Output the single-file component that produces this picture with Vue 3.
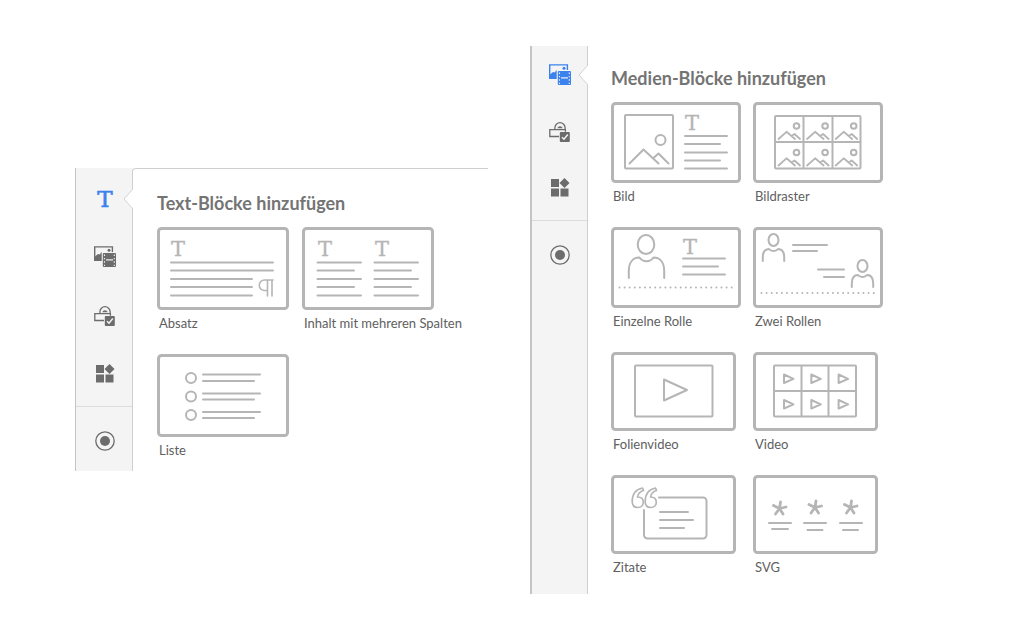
<script setup>
const rail = [
  { id: 'text', label: 'Text' },
  { id: 'media', label: 'Medien' },
  { id: 'interactive', label: 'Interaktiv' },
  { id: 'widgets', label: 'Widgets' },
]

const panels = [
  {
    id: 'text',
    title: 'Text-Blöcke hinzufügen',
    tools: rail,
    cards: [
      { kind: 'absatz', label: 'Absatz', w: 132, h: 83 },
      { kind: 'spalten', label: 'Inhalt mit mehreren Spalten', w: 132, h: 83 },
      { kind: 'liste', label: 'Liste', w: 132, h: 83 },
    ],
  },
  {
    id: 'media',
    title: 'Medien-Blöcke hinzufügen',
    tools: rail.slice(1),
    cards: [
      { kind: 'bild', label: 'Bild', w: 130, h: 81 },
      { kind: 'bildraster', label: 'Bildraster', w: 130, h: 81 },
      { kind: 'rolle', label: 'Einzelne Rolle', w: 130, h: 81 },
      { kind: 'rollen', label: 'Zwei Rollen', w: 130, h: 81 },
      { kind: 'folienvideo', label: 'Folienvideo', w: 125, h: 79 },
      { kind: 'video', label: 'Video', w: 125, h: 79 },
      { kind: 'zitate', label: 'Zitate', w: 125, h: 79 },
      { kind: 'svg', label: 'SVG', w: 125, h: 79 },
    ],
  },
]

const cells = [0, 1].flatMap((row) => [0, 1, 2].map((col) => ({ row, col })))
</script>

<template>
  <main class="page">
    <section v-for="panel in panels" :key="panel.id" class="panel" :class="panel.id">
      <nav class="rail">
        <div class="tools">
          <button
            v-for="tool in panel.tools"
            :key="tool.id"
            type="button"
            class="tool"
            :class="{ active: tool.id === panel.id }"
            :aria-label="tool.label"
          >
            <svg v-if="tool.id === 'text'" width="30" height="34" viewBox="0 0 30 34">
              <text class="rail-letter" x="15" y="25" text-anchor="middle">T</text>
            </svg>
            <svg v-else-if="tool.id === 'media'" width="22" height="22" viewBox="0 0 22 22">
              <path d="M7.5 14.4H.7V.9h17.7v5" fill="none" stroke="currentColor" stroke-width="1.4" />
              <path d="M1 14.5v-4l3-2.6 1.6.6L7.7 6v8.5z" fill="currentColor" />
              <circle cx="15" cy="4.3" r="1.5" fill="currentColor" />
              <rect x="8.8" y="7" width="13.2" height="14" rx="1" fill="currentColor" />
              <path d="M12 13.9h7" class="knock" stroke-width="1.2" />
              <path d="M10.5 8.5v11.5M20.3 8.5v11.5" class="knock" stroke-width="1.1" stroke-dasharray="1.4 2" />
            </svg>
            <svg v-else-if="tool.id === 'interactive'" width="22" height="22" viewBox="0 0 22 22">
              <path d="M10 16.500H.8V9.700H16.400v2" fill="none" stroke="currentColor" stroke-width="1.3" />
              <path d="M5.900 9.500V7.800a5.100 5.100 0 0 1 10.200 0v1.700" fill="none" stroke="currentColor" stroke-width="1.3" />
              <path d="M8.300 8.200a2.800 2.800 0 0 1 5.400 0z" fill="currentColor" />
              <rect x="10.800" y="12" width="10" height="10" rx="1" fill="currentColor" />
              <path d="M13 17.200l2 2 3.800-4.600" class="knock" stroke-width="1.5" />
            </svg>
            <svg v-else width="22" height="22" viewBox="0 0 22 22">
              <path
                d="M2 3h8v8H2zM2 12.500h8v8H2zM11.500 12.500h8v8h-8zM15.500 2l5 5-5 5-5-5z"
                fill="currentColor"
              />
            </svg>
            <svg v-if="tool.id === panel.id" class="notch" width="10" height="22" viewBox="0 0 10 22">
              <path d="M10 1.500L9.500 1.500 1 11l8.500 9.500H10" fill="#fff" stroke="#d2d2d2" />
            </svg>
          </button>
        </div>
        <div class="tools record">
          <button type="button" class="tool" aria-label="Aufzeichnen">
            <svg width="22" height="22" viewBox="0 0 22 22">
              <circle cx="11" cy="11" r="9.200" fill="none" stroke="currentColor" stroke-width="1.3" />
              <circle cx="11" cy="11" r="5" fill="currentColor" />
            </svg>
          </button>
        </div>
      </nav>

      <div class="body">
        <h2>{{ panel.title }}</h2>
        <div class="cards">
          <button v-for="card in panel.cards" :key="card.kind" type="button" class="card">
            <svg class="art" :width="card.w" :height="card.h" :viewBox="`0 0 ${card.w} ${card.h}`" aria-hidden="true">
              <rect x="1.5" y="1.5" :width="card.w - 3" :height="card.h - 3" rx="3" stroke-width="3" />

              <g v-if="card.kind === 'absatz'">
                <text x="21" y="29">T</text>
                <path d="M14 35.500H116M14 43.500H116M14 52H95M14 60H95M14 68.500H95" />
                <path d="M116 53H107.500a5 5 0 0 0 0 10.500H110.500M110.500 53V69M115 53V69" stroke-width="1.6" />
              </g>

              <g v-else-if="card.kind === 'spalten'">
                <text x="23" y="29">T</text>
                <text x="80" y="29">T</text>
                <path d="M15.500 35.500H59M15.500 43.500H52M15.500 52H59M15.500 60H52M15.500 68.500H59" />
                <path d="M72.500 35.500H116M72.500 43.500H109M72.500 52H116M72.500 60H109M72.500 68.500H116" />
              </g>

              <g v-else-if="card.kind === 'liste'">
                <circle v-for="y in [24, 42.5, 61]" :key="y" cx="34" :cy="y" r="5" />
                <path d="M46 20.500H103M46 27H97M46 39.500H103M46 45.500H97M46 58H103M46 64H97" />
              </g>

              <g v-else-if="card.kind === 'bild'">
                <rect x="14" y="13" width="48" height="53.500" rx="1" />
                <circle cx="49.500" cy="38" r="5" />
                <path d="M18.500 61.500L32.500 47.500 47.500 61.500M42.500 56L47.500 51.500 57.500 61.500" />
                <text x="81" y="28">T</text>
                <path d="M74 34H116M74 42H109M74 50.500H116M74 58.500H109M74 66.500H116" />
              </g>

              <g v-else-if="card.kind === 'bildraster'">
                <rect x="22" y="14" width="85.500" height="52.500" rx="1" />
                <path d="M50.500 14V66M79.500 14V66M22 40H107" />
                <g v-for="c in cells" :key="`${c.row}-${c.col}`" :transform="`translate(${c.col * 28.6} ${c.row * 26.5})`">
                  <circle cx="43.500" cy="24" r="2.800" />
                  <path d="M25.500 37L33.500 29.800 42 37M38.500 34L41.500 32 47 37" stroke-width="1.8" />
                </g>
              </g>

              <g v-else-if="card.kind === 'rolle'">
                <ellipse cx="35" cy="17.500" rx="8.300" ry="9.500" />
                <path d="M17.800 51V44C17.800 36 21.500 30.500 28.500 30.500Q31 34.200 35.500 34.200T42.500 30.500C49.500 30.500 53.200 36 53.200 44V51" />
                <text x="79" y="27">T</text>
                <path d="M72 31.500H114M72 39.500H107M72 47.500H114" />
                <path class="dots" d="M8.500 60.500H122" />
              </g>

              <g v-else-if="card.kind === 'rollen'">
                <g v-for="p in [[0, 0], [89, 26]]" :key="p[0]" :transform="`translate(${p[0]} ${p[1]})`">
                  <ellipse cx="20.500" cy="13" rx="5" ry="6" />
                  <path d="M9.800 34V30.500C9.800 25.500 12 22 16 22Q17.500 24 20.500 24T25 22C29 22 31.200 25.500 31.200 30.500V34" />
                </g>
                <path d="M40 18H74M40 24H64M65 42.500H91M71 50H91" />
                <path class="dots" d="M8.500 66H122" />
              </g>

              <g v-else-if="card.kind === 'folienvideo'">
                <rect x="24" y="13.500" width="77.500" height="51" rx="1" />
                <path d="M53 27.500V48.500L76 38z" />
              </g>

              <g v-else-if="card.kind === 'video'">
                <rect x="21" y="13.500" width="82" height="51" rx="1" />
                <path d="M48.500 14V64M75.500 14V64M21 39H103" />
                <path
                  v-for="c in cells"
                  :key="`${c.row}-${c.col}`"
                  d="M31 22.500V31L40.500 26.800z"
                  :transform="`translate(${c.col * 27.3} ${c.row * 25.5})`"
                />
              </g>

              <g v-else-if="card.kind === 'zitate'">
                <path
                  v-for="x in [0, 13]"
                  :key="x"
                  :transform="`translate(${x} 0)`"
                  d="M31.500 13C24.500 14.500 21.200 20 21.200 26.500C21.200 30.500 23.500 32.500 26.800 32.500C30 32.500 32.300 30.200 32.300 27.200C32.300 24 30 22 26.500 22C27 18.500 29 16.500 32.500 15.500z"
                  stroke-width="1.7"
                />
                <path d="M48 22.500H92A3.500 3.500 0 0 1 95.500 26V60A3.500 3.500 0 0 1 92 63.500H36.500A3.500 3.500 0 0 1 33 60V35" />
                <path d="M49 37H77M49 45H82M49 53H73" />
              </g>

              <g v-else>
                <path
                  v-for="s in [[26.5, 33.5], [62, 32.5], [97.5, 32.5]]"
                  :key="s[0]"
                  :transform="`translate(${s[0]} ${s[1]})`"
                  d="M0 0L1 -6.500M0 0L6.500 -1.500M0 0L3.500 5.500M0 0L-4 5.500M0 0L-6 -3"
                  stroke-width="2.8"
                />
                <path d="M16 48H38M19 54H35M51 48H73M54.500 55H69.500M87 48H109M90 55H105" />
              </g>
            </svg>
            <span class="label">{{ card.label }}</span>
          </button>
        </div>
      </div>
    </section>
  </main>
</template>

<style>
body {
  background: #fff;
}
</style>

<style scoped>
.page {
  display: grid;
  grid-template-columns: 413fr 452fr;
  align-items: start;
  gap: 42px;
  padding: 46px 42px 34px 75px;
  font-family: Lato, "Open Sans", sans-serif;
}

.panel {
  display: flex;
}

.panel.text {
  margin-top: 122px;
  --gap: 36px;
  --top: 20px;
  --cols: 132px 132px;
  --col-gap: 13px;
}

.panel.media {
  --gap: 34px;
  --top: 18px;
  --cols: 130px 130px;
  --col-gap: 12px;
}

.rail {
  flex: none;
  box-sizing: border-box;
  width: 58px;
  background: #f4f4f4;
  border-left: 1px solid #c4c4c4;
}

.media .rail {
  width: 57px;
  border-left-width: 2px;
}

.tools {
  display: flex;
  flex-direction: column;
  align-items: stretch;
  gap: var(--gap);
  padding: var(--top) 0 22px;
}

.record {
  padding: 23px 0 18px;
  border-top: 1px solid #dcdcdc;
}

.tool {
  position: relative;
  display: flex;
  justify-content: center;
  align-items: center;
  height: 22px;
  padding: 0;
  border: 0;
  background: none;
  color: #6c6c6c;
  cursor: pointer;
}

.tool svg {
  flex: none;
}

.tool.active {
  color: #3b82ee;
}

.rail-letter {
  font: 23px "DejaVu Serif", serif;
  fill: currentColor;
  stroke: currentColor;
  stroke-width: 0.6;
}

.knock {
  fill: none;
  stroke: #f4f4f4;
}

.notch {
  position: absolute;
  top: 0;
  right: 0;
  z-index: 1;
}

.media .notch {
  right: -1px;
}

.body {
  flex: 1;
  min-width: 0;
  padding: 20px 0 14px 23px;
  border-left: 1px solid #cfcfcf;
}

.text .body {
  padding: 22px 0 8px 24px;
  margin-left: -1px;
  border-top: 1px solid #cfcfcf;
  border-top-left-radius: 4px;
  background: #fff;
}

h2 {
  margin: 0 0 12px;
  font-size: 18px;
  line-height: 24px;
  font-weight: 700;
  color: #747474;
}

.cards {
  display: grid;
  grid-template-columns: var(--cols);
  gap: 18px var(--col-gap);
}

.card {
  display: flex;
  flex-direction: column;
  align-items: flex-start;
  padding: 0;
  border: 0;
  background: none;
  font: inherit;
  cursor: pointer;
}

.art {
  display: block;
  fill: none;
  stroke: #b5b5b5;
  stroke-width: 2px;
  stroke-linecap: round;
  stroke-linejoin: round;
}

.art text {
  font: 21px "DejaVu Serif", serif;
  text-anchor: middle;
  fill: #b5b5b5;
  stroke: #b5b5b5;
  stroke-width: 0.3;
}

.dots {
  stroke-dasharray: 0 5.1;
}

.label {
  padding-left: 2px;
  font-size: 13px;
  line-height: 26px;
  white-space: nowrap;
  color: #606060;
}
</style>
